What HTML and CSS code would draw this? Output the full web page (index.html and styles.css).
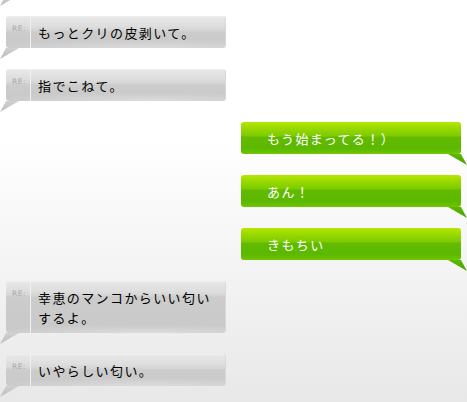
FILE: index.html
```html
<!DOCTYPE html>
<html lang="ja">
<head>
<meta charset="utf-8">
<link rel="stylesheet" href="styles.css">
</head>
<body>
<div class="chat">
  <div class="row left"><div class="bubble gray ghost"></div></div>
  <div class="row left"><div class="bubble gray"><span class="re">RE:</span><div class="msg">もっとクリの皮剥いて。</div></div></div>
  <div class="row left"><div class="bubble gray"><span class="re">RE:</span><div class="msg">指でこねて。</div></div></div>
  <div class="row right"><div class="bubble green"><div class="msg">もう始まってる！）</div></div></div>
  <div class="row right"><div class="bubble green"><div class="msg">あん！</div></div></div>
  <div class="row right"><div class="bubble green"><div class="msg">きもちい</div></div></div>
  <div class="row left"><div class="bubble gray"><span class="re">RE:</span><div class="msg">幸恵のマンコからいい匂い<br>するよ。</div></div></div>
  <div class="row left"><div class="bubble gray"><span class="re">RE:</span><div class="msg">いやらしい匂い。</div></div></div>
</div>
</body>
</html>
```
FILE: styles.css
```css
html, body {
  margin: 0;
  padding: 0;
  height: 100%;
}
body {
  width: 467px;
  height: 402px;
  overflow: hidden;
  background: linear-gradient(to bottom, #ffffff 0px, #ffffff 140px, #e8e8e8 402px);
  font-family: "Noto Sans CJK JP", "Noto Sans", sans-serif;
}
.chat {
  display: flex;
  flex-direction: column;
  gap: 21px;
  margin-top: -37px;
  padding: 0 6px;
}
.row {
  display: flex;
}
.row.left { justify-content: flex-start; }
.row.right { justify-content: flex-end; }
.bubble {
  position: relative;
  width: 220px;
  min-height: 32px;
  box-sizing: border-box;
  border-radius: 3px;
  display: flex;
}
.msg {
  font-size: 13px;
  letter-spacing: 1.4px;
  line-height: 20px;
  padding: 7px 0 5px;
}
.gray {
  background:
    radial-gradient(ellipse 240px 12px at 65% 100%, rgba(255,255,255,0.35), rgba(255,255,255,0) 70%),
    linear-gradient(to bottom, #f0f0f0 0px, #e6e6e6 2px, #dedede 10px, #d6d6d6 14px, #cccccc 16px, #c9c9c9 100%);
  box-shadow: inset -1px 0 0 #d8d8d8;
  color: #000;
}
.gray .re {
  width: 25px;
  flex: none;
  box-sizing: border-box;
  border-right: 1px solid #f0f0f0;
  font-family: "DejaVu Sans", sans-serif;
  font-size: 7.5px;
  line-height: 8px;
  color: #a8a8a8;
  padding: 9px 0 0 6px;
  letter-spacing: 0.5px;
}
.gray .msg {
  padding-left: 7px;
}
.gray::after {
  content: "";
  position: absolute;
  left: -6px;
  top: 100%;
  width: 19px;
  height: 11px;
  background: linear-gradient(to bottom, #d0d0d0, #bdbdbd);
  clip-path: polygon(6px 0, 19px 0, 0 11px);
}
.green {
  background:
    linear-gradient(to bottom, #b6e800 0px, #a8e000 3px, #8fd400 9px, #7ccb00 14px, #62bb00 15px, #5cb800 26px, #66c000 30px, #74c800 100%);
  color: #fff;
}
.green .msg {
  padding-left: 26px;
}
.green::after {
  content: "";
  position: absolute;
  right: -6px;
  top: 100%;
  width: 19px;
  height: 11px;
  background: linear-gradient(to bottom, #5cb800, #4aa400);
  clip-path: polygon(0 0, 13px 0, 19px 11px);
}
```
